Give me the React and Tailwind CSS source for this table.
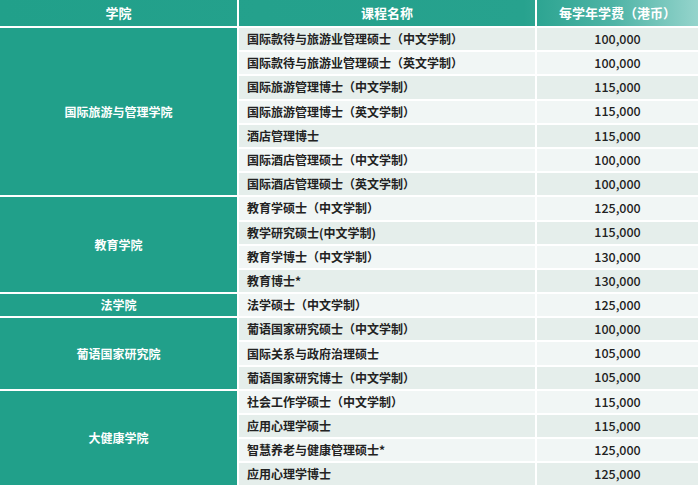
import React from "react";

const groups = [
  {
    school: "国际旅游与管理学院",
    courses: [
      ["国际款待与旅游业管理硕士（中文学制）", "100,000"],
      ["国际款待与旅游业管理硕士（英文学制）", "100,000"],
      ["国际旅游管理博士（中文学制）", "115,000"],
      ["国际旅游管理博士（英文学制）", "115,000"],
      ["酒店管理博士", "115,000"],
      ["国际酒店管理硕士（中文学制）", "100,000"],
      ["国际酒店管理硕士（英文学制）", "100,000"],
    ],
  },
  {
    school: "教育学院",
    courses: [
      ["教育学硕士（中文学制）", "125,000"],
      ["教学研究硕士(中文学制)", "115,000"],
      ["教育学博士（中文学制）", "130,000"],
      ["教育博士*", "130,000"],
    ],
  },
  {
    school: "法学院",
    courses: [["法学硕士（中文学制）", "125,000"]],
  },
  {
    school: "葡语国家研究院",
    courses: [
      ["葡语国家研究硕士（中文学制）", "100,000"],
      ["国际关系与政府治理硕士", "105,000"],
      ["葡语国家研究博士（中文学制）", "105,000"],
    ],
  },
  {
    school: "大健康学院",
    courses: [
      ["社会工作学硕士（中文学制）", "115,000"],
      ["应用心理学硕士", "115,000"],
      ["智慧养老与健康管理硕士*", "125,000"],
      ["应用心理学博士", "125,000"],
    ],
  },
];

export default function App() {
  let rowIndex = 0;
  return (
    <div
      className="w-[700px] h-[485px] bg-white overflow-hidden"
      style={{ fontFamily: '"Noto Sans CJK SC", "Noto Sans", sans-serif' }}
    >
      <table className="w-[698px] border-collapse table-fixed">
        <colgroup>
          <col className="w-[238px]" />
          <col className="w-[298px]" />
          <col className="w-[162px]" />
        </colgroup>
        <thead>
          <tr className="h-[27px] bg-[linear-gradient(to_right,#21a08a_0%,#27a28e_75%,#4fb4a6_88%,#95d4cc_100%)] text-white text-[13px] font-bold">
            <th className="border-2 border-white border-t-0 border-l-0 text-center font-bold">学院</th>
            <th className="border-2 border-white border-t-0 text-center font-bold">课程名称</th>
            <th className="border-2 border-white border-t-0 border-r-0 text-center font-bold">每学年学费（港币）</th>
          </tr>
        </thead>
        <tbody>
          {groups.map((g) =>
            g.courses.map(([name, fee], i) => {
              const dark = rowIndex % 2 === 0;
              rowIndex++;
              const bg = dark ? "bg-[#e5eeeb]" : "bg-[#f1f6f5]";
              return (
                <tr key={name} className="h-[24.2px] text-[12px] text-[#222]">
                  {i === 0 && (
                    <td
                      rowSpan={g.courses.length}
                      className="border-2 border-white border-l-0 bg-[#21a08a] text-white text-center font-bold text-[12px]"
                    >
                      {g.school}
                    </td>
                  )}
                  <td className={`border-2 border-white pl-[8px] font-semibold leading-none ${bg}`}>
                    {name}
                  </td>
                  <td className={`border-2 border-white border-r-0 text-center text-[12.5px] font-medium leading-none ${bg}`}>
                    {fee}
                  </td>
                </tr>
              );
            })
          )}
        </tbody>
      </table>
    </div>
  );
}
